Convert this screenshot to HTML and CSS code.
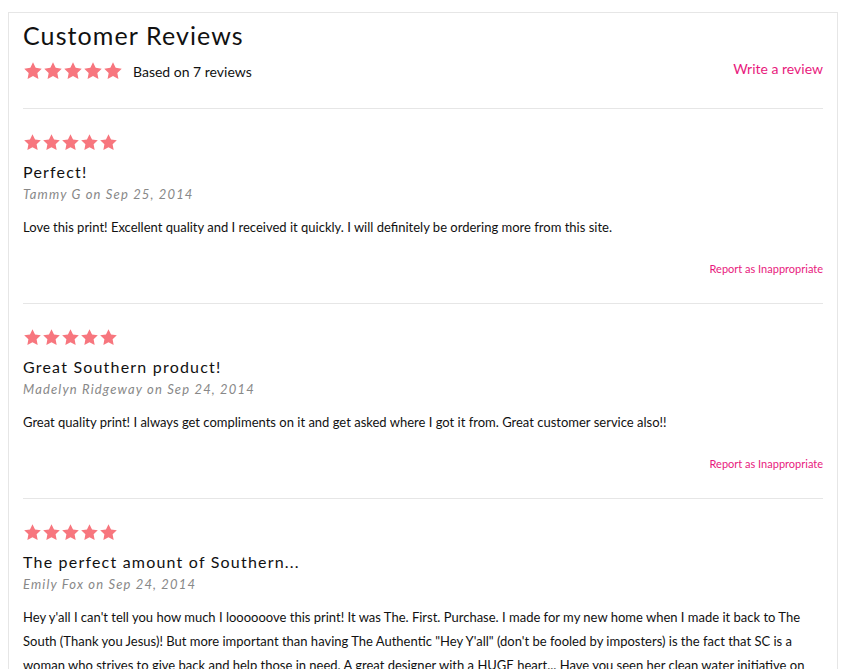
FILE: index.html
```html
<!DOCTYPE html>
<html lang="en">
<head>
    <meta charset="utf-8">
    <title>Customer Reviews</title>
    <link rel="stylesheet" href="styles.css">
</head>
<body>
    <svg width="0" height="0" class="defs">
        <defs>
            <symbol id="star" viewBox="0 0 24 24">
                <path d="M12 1.5l3.2 6.7 7.3 1-5.3 5.1 1.3 7.3L12 18.1l-6.5 3.5 1.3-7.3-5.3-5.1 7.3-1z"/>
            </symbol>
        </defs>
    </svg>
    <div class="reviews">
        <div class="reviews-header">
            <h2>Customer Reviews</h2>
            <div class="summary">
                <div class="stars big">
                    <svg><use href="#star"/></svg><svg><use href="#star"/></svg><svg><use href="#star"/></svg><svg><use href="#star"/></svg><svg><use href="#star"/></svg>
                </div>
                <span class="based">Based on 7 reviews</span>
                <a href="#" class="write">Write a review</a>
            </div>
        </div>

        <div class="review">
            <div class="stars">
                <svg><use href="#star"/></svg><svg><use href="#star"/></svg><svg><use href="#star"/></svg><svg><use href="#star"/></svg><svg><use href="#star"/></svg>
            </div>
            <h3>Perfect!</h3>
            <div class="meta"><span class="author">Tammy G</span> on <span class="date">Sep 25, 2014</span></div>
            <p>Love this print! Excellent quality and I received it quickly. I will definitely be ordering more from this site.</p>
            <div class="report"><a href="#">Report as Inappropriate</a></div>
        </div>

        <div class="review">
            <div class="stars">
                <svg><use href="#star"/></svg><svg><use href="#star"/></svg><svg><use href="#star"/></svg><svg><use href="#star"/></svg><svg><use href="#star"/></svg>
            </div>
            <h3>Great Southern product!</h3>
            <div class="meta"><span class="author">Madelyn Ridgeway</span> on <span class="date">Sep 24, 2014</span></div>
            <p>Great quality print! I always get compliments on it and get asked where I got it from. Great customer service also!!</p>
            <div class="report"><a href="#">Report as Inappropriate</a></div>
        </div>

        <div class="review">
            <div class="stars">
                <svg><use href="#star"/></svg><svg><use href="#star"/></svg><svg><use href="#star"/></svg><svg><use href="#star"/></svg><svg><use href="#star"/></svg>
            </div>
            <h3>The perfect amount of Southern...</h3>
            <div class="meta"><span class="author">Emily Fox</span> on <span class="date">Sep 24, 2014</span></div>
            <p>Hey y'all I can't tell you how much I loooooove this print! It was The. First. Purchase. I made for my new home when I made it back to The South (Thank you Jesus)! But more important than having The Authentic "Hey Y'all" (don't be fooled by imposters) is the fact that SC is a woman who strives to give back and help those in need. A great designer with a HUGE heart... Have you seen her clean water initiative on her site? It's amazing and I love being a part of it.</p>
            <div class="report"><a href="#">Report as Inappropriate</a></div>
        </div>
    </div>
</body>
</html>
```

FILE: styles.css
```css
body{
    margin: 0;
    padding: 0;
    font-family: 'Lato', 'Liberation Sans', sans-serif;
    color: #111;
    background: #fff;
}
.defs{
    position: absolute;
}
.reviews{
    margin: 12px 8px 0;
    border: 1px solid #e6e6e6;
    padding: 0 14px;
}
.reviews-header{
    padding-bottom: 27px;
    border-bottom: 1px solid #e6e6e6;
}
h2{
    margin: 0;
    padding-top: 7px;
    font-size: 25px;
    line-height: 30px;
    font-weight: normal;
    letter-spacing: 1.1px;
}
.summary{
    display: flex;
    align-items: center;
    margin-top: 11px;
    height: 20px;
}
.stars{
    display: flex;
    height: 19px;
}
.stars svg{
    width: 19px;
    height: 19px;
    fill: #f7767e;
}
.stars.big{
    height: 20px;
}
.stars.big svg{
    width: 20px;
    height: 20px;
}
.based{
    margin-left: 10px;
    font-size: 14px;
    padding-top: 1px;
}
a{
    color: #e8197d;
    text-decoration: none;
}
.write{
    margin-left: auto;
    font-size: 14px;
    margin-top: -5px;
}
.review{
    padding: 24px 0 26px;
    border-bottom: 1px solid #e6e6e6;
}
.review h3{
    margin: 9px 0 0;
    font-size: 16px;
    line-height: 22px;
    font-weight: normal;
    letter-spacing: 1.2px;
}
.meta{
    margin-top: 2px;
    font-size: 13px;
    line-height: 18px;
    font-style: italic;
    color: #888;
    letter-spacing: 1.15px;
}
.review p{
    margin: 12px 0 0;
    font-size: 13px;
    line-height: 24px;
}
.report{
    margin-top: 22px;
    text-align: right;
    font-size: 11px;
    line-height: 16px;
}
```
